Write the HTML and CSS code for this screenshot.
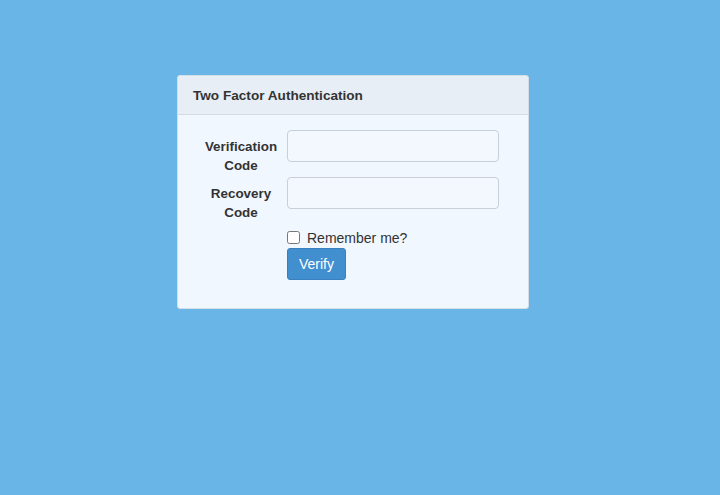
FILE: index.html
```html
<!DOCTYPE html>
<html>
<head>
<meta charset="utf-8">
<link rel="stylesheet" href="styles.css">
</head>
<body>
<div class="card">
  <div class="card-header">Two Factor Authentication</div>
  <form class="card-body">
    <div class="row">
      <label class="label" for="vc">Verification Code</label>
      <input class="input" id="vc" type="text">
    </div>
    <div class="row">
      <label class="label" for="rc">Recovery Code</label>
      <input class="input" id="rc" type="text">
    </div>
    <div class="actions">
      <label class="check"><input type="checkbox" class="checkbox"><span>Remember me?</span></label>
      <button type="button" class="btn">Verify</button>
    </div>
  </form>
</div>
</body>
</html>
```

FILE: styles.css
```css
html, body {
  margin: 0;
  padding: 0;
  height: 100%;
}
body {
  background: #69b5e7;
  font-family: "Liberation Sans", Arial, sans-serif;
  color: #333;
  padding-top: 75px;
  padding-left: 177px;
  box-sizing: border-box;
}
.card {
  width: 352px;
  box-sizing: border-box;
  background: #f1f7fe;
  border: 1px solid #d5dde6;
  border-radius: 3px;
}
.card-header {
  height: 39px;
  box-sizing: border-box;
  padding: 0 15px;
  display: flex;
  align-items: center;
  background: #e8eef5;
  border-bottom: 1px solid #d3dbe4;
  border-radius: 3px 3px 0 0;
  font-weight: bold;
  font-size: 13.6px;
  color: #333;
}
.card-body {
  margin: 0;
  padding: 15px 29px 28px 19px;
  display: flex;
  flex-direction: column;
}
.row {
  display: grid;
  grid-template-columns: 88px 212px;
  column-gap: 2px;
  height: 45px;
  margin-bottom: 2px;
}
.label {
  padding-top: 7px;
  font-weight: bold;
  font-size: 13.4px;
  line-height: 19px;
  text-align: center;
}
.input {
  height: 32px;
  box-sizing: border-box;
  border: 1px solid #c9cfd6;
  border-radius: 4px;
  background: #f3f8fe;
  margin: 0;
  padding: 6px 10px;
  font: inherit;
}
.actions {
  margin-left: 90px;
  padding-top: 3px;
  display: flex;
  flex-direction: column;
  align-items: flex-start;
}
.check {
  display: flex;
  align-items: center;
  gap: 7px;
  height: 21px;
  font-size: 14px;
  color: #333;
}
.checkbox {
  margin: 0;
  width: 13px;
  height: 13px;
}
.btn {
  height: 32px;
  padding: 0 11px;
  border: 1px solid #3a80bf;
  border-radius: 3px;
  background: #428fd0;
  color: #fff;
  font-family: "Liberation Sans", Arial, sans-serif;
  font-size: 14px;
}
```
